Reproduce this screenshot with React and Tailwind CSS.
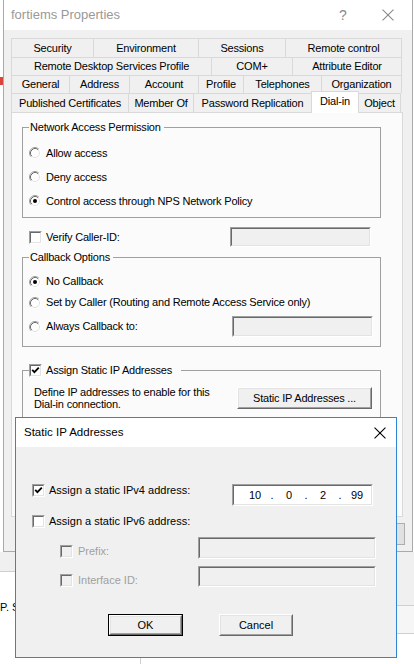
import React from "react";

const tabRows = [
  {
    h: "h-[19px]",
    tabs: [
      ["Security", "w-[82px]"],
      ["Environment", "w-[105px]"],
      ["Sessions", "w-[87px]"],
      ["Remote control", "w-[116px]"],
    ],
  },
  {
    h: "h-[18px]",
    tabs: [
      ["Remote Desktop Services Profile", "w-[200px]"],
      ["COM+", "w-[81px]"],
      ["Attribute Editor", "w-[109px]"],
    ],
  },
  {
    h: "h-[18px]",
    tabs: [
      ["General", "w-[58px]"],
      ["Address", "w-[60px]"],
      ["Account", "w-[69px]"],
      ["Profile", "w-[45px]"],
      ["Telephones", "w-[78px]"],
      ["Organization", "w-[80px]"],
    ],
  },
  {
    h: "h-[19px]",
    tabs: [
      ["Published Certificates", "w-[117px]"],
      ["Member Of", "w-[65px]"],
      ["Password Replication", "w-[118px]"],
      ["Dial-in", "w-[48px]", true],
      ["Object", "w-[42px]"],
    ],
  },
];

// classic sunken 3d frame (text boxes, check boxes)
const Sunken = ({ className = "", fill = "bg-white", children }) => (
  <div className={`border border-t-[#a0a0a0] border-l-[#a0a0a0] border-r-white border-b-white ${className}`}>
    <div className={`w-full h-full border border-t-[#696969] border-l-[#696969] border-r-[#e3e3e3] border-b-[#e3e3e3] ${fill}`}>
      {children}
    </div>
  </div>
);

const Check = ({ checked, disabled }) => (
  <Sunken className="w-[13px] h-[13px] shrink-0" fill={disabled ? "bg-[#f0f0f0]" : "bg-white"}>
    {checked && (
      <svg width="9" height="9" viewBox="0 0 9 9" className="block">
        <path d="M1.2 3.8 L3.4 6.2 L7.8 1.6" stroke="#000" strokeWidth="1.8" fill="none" />
      </svg>
    )}
  </Sunken>
);

const Radio = ({ checked }) => (
  <svg width="12" height="12" viewBox="0 0 12 12" className="shrink-0">
    <circle cx="6" cy="6" r="5" fill="#fff" />
    <path d="M2.11 9.89 A5.5 5.5 0 0 1 9.89 2.11" stroke="#a0a0a0" fill="none" />
    <path d="M9.89 2.11 A5.5 5.5 0 0 1 2.11 9.89" stroke="#ffffff" fill="none" />
    <path d="M2.82 9.18 A4.5 4.5 0 0 1 9.18 2.82" stroke="#696969" fill="none" />
    <path d="M9.18 2.82 A4.5 4.5 0 0 1 2.82 9.18" stroke="#e3e3e3" fill="none" />
    {checked && <circle cx="6" cy="6" r="2" fill="#000" />}
  </svg>
);

const Button = ({ className = "", def, children }) => (
  <div className={`${def ? "border border-black" : ""} ${className}`}>
    <div className="h-full border border-t-white border-l-white border-r-[#696969] border-b-[#696969]">
      <div className="h-full border border-t-[#e3e3e3] border-l-[#e3e3e3] border-r-[#a0a0a0] border-b-[#a0a0a0] bg-[#f0f0f0] flex items-center justify-center">
        {children}
      </div>
    </div>
  </div>
);

const RadioRow = ({ checked, label, className = "h-[24px]", children }) => (
  <div className={`flex items-center ${className}`}>
    <div className="flex items-center gap-[5px] w-[203px] shrink-0">
      <Radio checked={checked} />
      <span>{label}</span>
    </div>
    {children}
  </div>
);

const CloseIcon = ({ color, size = 11 }) => (
  <svg width={size} height={size} viewBox="0 0 11 11">
    <path d="M0.5 0.5 L10.5 10.5 M10.5 0.5 L0.5 10.5" stroke={color} strokeWidth="1" />
  </svg>
);

export default function App() {
  return (
    <div className="relative w-[414px] h-[664px] overflow-hidden bg-white font-['Liberation_Sans',Arial,sans-serif] text-black whitespace-nowrap">
      <div className="flex h-[552px]">
        <div className="w-[3px] shrink-0 flex flex-col">
          <div className="mt-[77px] h-[8px] bg-[#d9443b]" />
        </div>

        {/* properties window */}
        <div className="w-[410px] shrink-0 flex flex-col border-x border-b border-[#aaaaaa]">
          <div className="h-[30px] bg-white flex items-center pl-[7px]">
            <span className="text-[13px] text-[#999999]">fortiems Properties</span>
            <div className="ml-auto flex items-center pr-[1px]">
              <span className="w-[30px] text-center text-[14px] text-[#8a8a8a]">?</span>
              <span className="ml-[7px] w-[46px] flex justify-center">
                <CloseIcon color="#8a8a8a" size={12} />
              </span>
            </div>
          </div>

          <div className="flex-1 bg-[#f0f0f0] pt-[8px] pl-[7px] text-[11px] tracking-[-0.2px]">
            <div className="w-[392px]">
              {tabRows.map((row, i) => (
                <div key={i} className={`flex ${row.h} border-l border-[#d9d9d9]`}>
                  {row.tabs.map(([label, w, active]) =>
                    active ? (
                      <div
                        key={label}
                        className={`${w} -ml-px relative top-px z-10 self-end h-[22px] bg-white border-t border-x border-[#d9d9d9] flex items-center justify-center pb-[3px]`}
                      >
                        {label}
                      </div>
                    ) : (
                      <div
                        key={label}
                        className={`${w} bg-[#f0f0f0] border-t border-r border-[#d9d9d9] flex items-center justify-center`}
                      >
                        {label}
                      </div>
                    )
                  )}
                </div>
              ))}

              {/* tab page */}
              <div className="h-[405px] bg-[#fbfbfb] border border-[#d9d9d9] overflow-hidden">
                <fieldset className="ml-[10px] mt-[8px] w-[359px] border border-[#a0a0a0] pl-[6px] pt-[7px] pb-[4px]">
                  <legend className="pl-[1px] pr-[3px] leading-[13px]">Network Access Permission</legend>
                  <RadioRow label="Allow access" />
                  <RadioRow label="Deny access" />
                  <RadioRow checked label="Control access through NPS Network Policy" />
                </fieldset>

                <div className="mt-[9px] h-[20px] pl-[17px] flex items-center">
                  <div className="w-[201px] flex items-center gap-[4px]">
                    <Check />
                    <span>Verify Caller-ID:</span>
                  </div>
                  <Sunken className="w-[141px] h-[20px]" fill="bg-[#f0f0f0]" />
                </div>

                <fieldset className="ml-[10px] mt-[4px] w-[359px] border border-[#a0a0a0] pl-[6px] pt-[7px] pb-[9px]">
                  <legend className="pl-[1px] pr-[3px] leading-[13px]">Callback Options</legend>
                  <RadioRow checked label="No Callback" className="h-[21px]" />
                  <RadioRow label="Set by Caller (Routing and Remote Access Service only)" className="h-[21px]" />
                  <RadioRow label="Always Callback to:" className="h-[21px] mt-[3px]">
                    <Sunken className="w-[141px] h-[21px]" fill="bg-[#f0f0f0]" />
                  </RadioRow>
                </fieldset>

                <fieldset className="ml-[10px] mt-[17px] w-[359px] border border-[#a0a0a0] pl-[6px] pt-[10px] pb-[40px]">
                  <legend className="pr-[9px] leading-[13px]">
                    <span className="flex items-center gap-[4px]">
                      <Check checked />
                      <span>Assign Static IP Addresses</span>
                    </span>
                  </legend>
                  <div className="ml-[5px] flex items-center h-[22px]">
                    <div className="w-[203px] leading-[12px]">
                      Define IP addresses to enable for this
                      <br />
                      Dial-in connection.
                    </div>
                    <Button className="w-[135px] h-[22px]">Static IP Addresses ...</Button>
                  </div>
                </fieldset>
              </div>

              <div className="mt-[6px] flex justify-end gap-[6px] -mr-[2px]">
                {["OK", "Cancel", "Apply", "Help"].map((b) => (
                  <div key={b} className="w-[75px] h-[22px] bg-[#e1e1e1] border border-[#adadad] flex items-center justify-center">
                    {b}
                  </div>
                ))}
              </div>
            </div>
          </div>
        </div>
      </div>

      {/* what lies below the window */}
      <div className="flex h-[112px]">
        <div className="w-[141px] border-r border-[#d0d0d0]">
          <div className="h-[20px] bg-[#f0f0f0] border-b border-[#cfcfcf]" />
          <div className="mt-[29px] text-[11px] leading-[13px]">P. Smith</div>
        </div>
        <div className="flex-1">
          <div className="h-[54px] bg-[#f0f0f0] border-b border-[#d0d0d0]" />
          <div className="h-[28px] bg-[#f6f6f6] border-b border-[#d0d0d0]" />
        </div>
      </div>

      {/* Static IP Addresses dialog */}
      <div className="absolute left-[15px] top-[417px] w-[382px] h-[241px] border border-[#2f86d4] bg-[#f0f0f0] flex flex-col text-[11px]">
        <div className="h-[29px] bg-white flex items-center justify-between pl-[8px] pr-[10px]">
          <span className="text-[11.5px]">Static IP Addresses</span>
          <CloseIcon color="#000" size={12} />
        </div>
        <div className="flex flex-col">
          <div className="mt-[37px] h-[22px] pl-[16px] flex items-start">
            <div className="w-[200px] h-[13px] flex items-center gap-[4px]">
              <Check checked />
              <span>Assign a static IPv4 address:</span>
            </div>
            <Sunken className="w-[141px] h-[22px]">
              <div className="h-full flex items-center pl-[7px] text-[11px]">
                <span className="w-[28px] text-center">10</span>
                <span className="w-[6px] text-center">.</span>
                <span className="w-[28px] text-center">0</span>
                <span className="w-[6px] text-center">.</span>
                <span className="w-[28px] text-center">2</span>
                <span className="w-[6px] text-center">.</span>
                <span className="w-[28px] text-center">99</span>
              </div>
            </Sunken>
          </div>
          <div className="mt-[4px] h-[22px] pl-[16px] flex items-center gap-[4px]">
            <Check />
            <span>Assign a static IPv6 address:</span>
          </div>
          <div className="mt-[5px] h-[22px] pl-[44px] flex items-end">
            <div className="w-[138px] h-[13px] mb-px flex items-center gap-[5px]">
              <Check disabled />
              <span className="text-[#a0a0a0]">Prefix:</span>
            </div>
            <Sunken className="w-[178px] h-[22px]" fill="bg-[#f0f0f0]" />
          </div>
          <div className="mt-[7px] h-[21px] pl-[44px] flex items-end">
            <div className="w-[138px] h-[13px] flex items-center gap-[5px]">
              <Check disabled />
              <span className="text-[#a0a0a0]">Interface ID:</span>
            </div>
            <Sunken className="w-[178px] h-[21px]" fill="bg-[#f0f0f0]" />
          </div>
          <div className="mt-[27px] pl-[92px] flex gap-[36px]">
            <Button def className="w-[75px] h-[22px]">OK</Button>
            <Button className="w-[74px] h-[22px]">Cancel</Button>
          </div>
        </div>
      </div>
    </div>
  );
}
